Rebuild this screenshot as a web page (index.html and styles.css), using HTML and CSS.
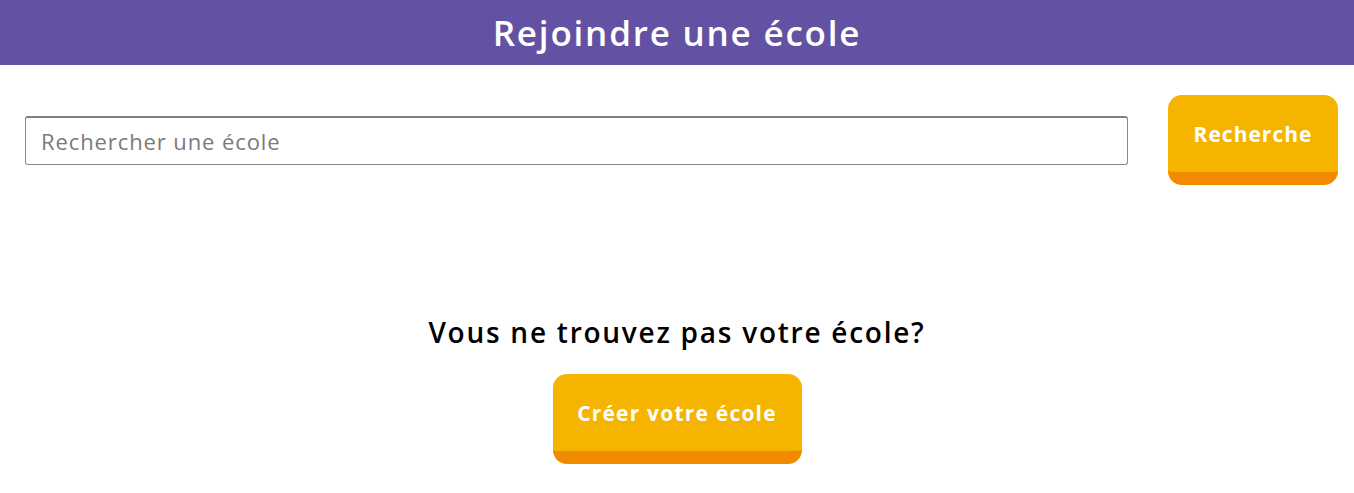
FILE: index.html
```html
<!DOCTYPE html>
<html lang="fr">
<head>
<meta charset="utf-8">
<title>Rejoindre une école</title>
<link rel="stylesheet" href="styles.css">
</head>
<body>
<header class="topbar">
  <h1 class="topbar-title">Rejoindre une école</h1>
</header>
<main>
  <form class="search-row">
    <input class="search-input" type="text" placeholder="Rechercher une école">
    <button class="btn btn-search" type="button">Recherche</button>
  </form>
  <section class="create">
    <h2 class="create-title">Vous ne trouvez pas votre école?</h2>
    <button class="btn btn-create" type="button">Créer votre école</button>
  </section>
</main>
</body>
</html>
```
FILE: styles.css
```css
* { box-sizing: border-box; }
body {
  margin: 0;
  background: #ffffff;
  font-family: "Open Sans", "Lato", sans-serif;
}
.topbar {
  height: 65px;
  background: #6352a3;
  display: flex;
  align-items: center;
  justify-content: center;
}
.topbar-title {
  margin: 0;
  color: #ffffff;
  font-size: 35px;
  font-weight: 600;
  letter-spacing: 1.8px;
  line-height: 1;
}
.search-row {
  display: flex;
  align-items: center;
  gap: 40px;
  padding: 30px 16px 0 25px;
  margin: 0;
}
.search-input {
  flex: 1;
  height: 49px;
  border: 1px solid #8a8a8a;
  border-top: 2px solid #808080;
  border-radius: 3px;
  padding: 0 15px;
  font-family: "Open Sans", "Lato", sans-serif;
  font-size: 22px;
  font-weight: 400;
  letter-spacing: 0.9px;
  color: #333;
}
.search-input::placeholder { color: #7a7a7a; }
.btn {
  border: none;
  border-bottom: 13px solid #f28a00;
  border-radius: 14px;
  background: #f5b400;
  color: #ffffff;
  font-family: "Open Sans", "Lato", sans-serif;
  font-weight: 700;
  font-size: 21px;
  letter-spacing: 1px;
  height: 90px;
  padding: 0;
  cursor: pointer;
}
.btn-search { width: 170px; padding-top: 1px; }
.btn-create { width: 249px; padding-top: 0; letter-spacing: 1.2px; }
.create {
  display: flex;
  flex-direction: column;
  align-items: center;
  padding-top: 129px;
}
.create-title {
  margin: 0 0 24px;
  font-size: 28px;
  font-weight: 600;
  color: #000;
  letter-spacing: 1.75px;
  line-height: 1.3;
}
```
